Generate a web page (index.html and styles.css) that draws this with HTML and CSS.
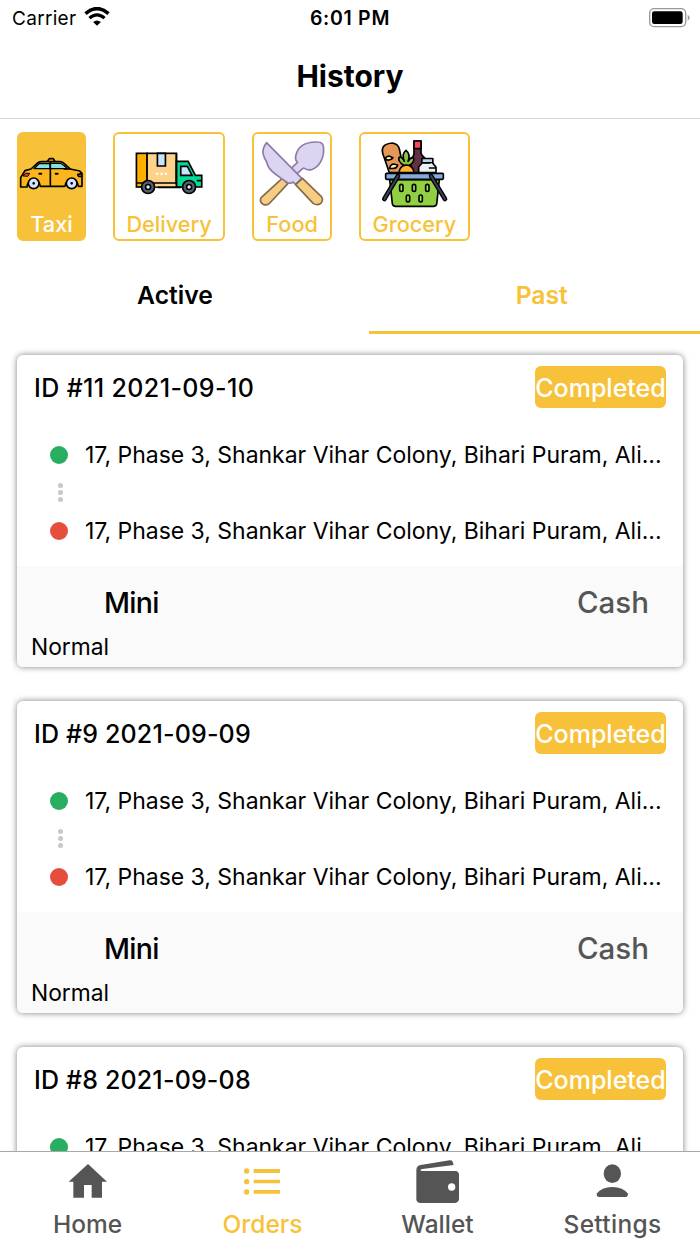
FILE: index.html
```html
<!DOCTYPE html>
<html lang="en">
<head>
    <meta charset="UTF-8">
    <title>History</title>
    <link rel="stylesheet" href="styles.css">
</head>
<body>
    <div class="app">
        <div class="status-bar">
            <div class="carrier">
                <span>Carrier</span>
                <svg class="wifi" viewBox="0 0 78 58">
                    <path d="M4 20 Q39 -10 74 20" fill="none" stroke="#000" stroke-width="11"/>
                    <path d="M16 34 Q39 14 62 34" fill="none" stroke="#000" stroke-width="10"/>
                    <path d="M27 46 Q39 36 51 46 L39 57 Z"/>
                </svg>
            </div>
            <span class="time">6:01 PM</span>
            <div class="battery">
                <svg viewBox="0 0 126 60">
                    <rect x="2" y="2" width="108" height="54" rx="13" fill="#fff" stroke="#999" stroke-width="4"/>
                    <rect x="9" y="10" width="92" height="38" rx="7"/>
                    <path d="M116 20 Q128 29 116 38 Z" fill="#999"/>
                </svg>
            </div>
        </div>
        <div class="header">History</div>

        <div class="categories">
            <div class="category taxi active">
                <svg viewBox="27 36 195 216" stroke="#000" stroke-width="5" stroke-linejoin="round" stroke-linecap="round">
                    <path d="M113 108 L118 101 H130 L134 108" fill="#ffb000"/>
                    <path d="M32 186 V158 L45 137 L63 132 L84 113 Q88 110 96 110 H150 Q158 111 163 116 L181 132 L209 138 L216 145 V184 H205 A20 20 0 0 0 165 184 H91 A20 20 0 0 0 51 186 Z" fill="#fcb51c"/>
                    <path d="M72 131 L87 116 H121 V131 Z" fill="#83e3e6" stroke-width="4"/>
                    <path d="M121 115 H149 Q156 115 173 131 H121 Z" fill="#83e3e6" stroke-width="4"/>
                    <path d="M121 113 V181 M163 132 H181"/>
                    <path d="M88 146 H94 M137 146 H143" stroke-width="6"/>
                    <path d="M40 152 L46 145 H59 L54 153 Z" fill="#ff3d25" stroke-width="3"/>
                    <path d="M214 146 L203 149 L206 154 H216" fill="none"/>
                    <circle cx="71" cy="175" r="16" fill="#d7e4ff"/>
                    <circle cx="185" cy="175" r="16" fill="#d7e4ff"/>
                    <path d="M71 175 h.1 M185 175 h.1" stroke-width="8"/>
                </svg>
                <span>Taxi</span>
            </div>
            <div class="category delivery">
                <svg viewBox="69.75 36 216 216" stroke="#000" stroke-width="5">
                    <rect x="80" y="85" width="32" height="101" fill="#ffae00"/>
                    <rect x="112" y="85" width="88" height="101" fill="#fdd28c"/>
                    <path d="M143 85 V123 H167 V85 Z" fill="#c4e5fb"/>
                    <path d="M200 109 H235 L257 151 H276 V186 H200 Z" fill="#05db92"/>
                    <path d="M213 124 H233 L247 151 H213 Z" fill="#c4e5fb"/>
                    <path d="M80 174 H200 M261 167 H276"/>
                    <path d="M132 181 H200" stroke="#fdd28c" stroke-width="7"/>
                    <path d="M143 187 H214 M200 85 V187"/>
                    <path d="M139 146 H146 M152 146 H159 M165 146 H172" stroke="#fff" stroke-width="6"/>
                    <circle cx="115" cy="186" r="19.500" fill="#536273"/>
                    <circle cx="238" cy="186" r="19.500" fill="#536273"/>
                    <circle cx="115" cy="186" r="7.500" fill="#e7edf3"/>
                    <circle cx="238" cy="186" r="7.500" fill="#e7edf3"/>
                </svg>
                <span>Delivery</span>
            </div>
            <div class="category food">
                <svg viewBox="34.5 36 216 216" stroke-width="5" stroke-linejoin="round">
                    <path d="M113 160 L130 176 L76 234 Q69 242 58 239 Q43 231 50 218 Z" fill="#f7cd83" stroke="#826c49"/>
                    <path d="M140 130 L159 112 Q151 105 154 91 C160 65 183 50 219 51 Q236 51 237 67 C240 98 225 126 201 134 Q187 137 178 129 L174 131 L158 146 Z" fill="#dcd5f2" stroke="#8f7aab"/>
                    <path d="M66 53 L172 160 L154 178 L145 171 Q140 177 129 173 C102 153 79 142 71 124 L65 108 C52 86 52 72 66 53 Z" fill="#dcd5f2" stroke="#8f7aab"/>
                    <path d="M174 160 L230 214 Q238 225 229 235 Q218 243 206 235 L153 179 Z" fill="#f7cd83" stroke="#826c49"/>
                </svg>
                <span>Food</span>
            </div>
            <div class="category grocery">
                <svg viewBox="72 36 216 216" stroke="#000" stroke-width="5" stroke-linejoin="round" stroke-linecap="round">
                    <path d="M106 143 L90 96 Q81 78 88 65 Q97 55 115 54 Q133 57 136 72 L151 143 Z" fill="#e69658"/>
                    <path d="M94 104 Q95 94 105 93 L117 98 Q111 108 94 104 M107 130 Q108 119 119 117 L131 120 Q128 133 107 130" fill="#fff3ad"/>
                    <path d="M180 48 H201 V85 Q204 94 212 99 V143 H170 V101 Q181 93 180 85 Z" fill="#643044"/>
                    <path d="M180 48 H201 V71 H180 Z" fill="#f64a5e"/>
                    <path d="M150 121 Q129 109 136 96 Q144 95 151 109 Q142 87 156 76 Q171 88 162 109 Q169 96 179 99 Q183 112 164 122 Z" fill="#8bc445"/>
                    <path d="M135 143 Q137 122 157 120 Q177 121 180 143 Z" fill="#ffb233"/>
                    <path d="M204 101 H236 V114 L246 127 V143 H194 V126 L204 114 Z" fill="#e8f0f4"/>
                    <path d="M204 101 H236 V113 H204 Z" fill="#b9d5ed" stroke-width="4"/>
                    <path d="M226 129 H244 M206 114 H228" stroke-width="4"/>
                    <path d="M107 164 H256 L248 238 Q246 244 238 244 H125 Q116 244 115 236 Z" fill="#91cf43"/>
                    <rect x="95" y="145" width="173" height="18" rx="3" fill="#82acdd"/>
                    <path d="M132 153 L91 222 M231 153 L273 222" stroke-width="14"/>
                    <path d="M132 153 L91 222 M231 153 L273 222" stroke="#39405c" stroke-width="6"/>
                    <g fill="#a9e851" stroke-width="5">
                        <rect x="137" y="178" width="10" height="21" rx="5"/>
                        <rect x="175" y="178" width="10" height="21" rx="5"/>
                        <rect x="215" y="178" width="10" height="21" rx="5"/>
                        <rect x="157" y="210" width="10" height="21" rx="5"/>
                        <rect x="195" y="210" width="10" height="21" rx="5"/>
                    </g>
                </svg>
                <span>Grocery</span>
            </div>
        </div>

        <div class="tabs">
            <div class="tab">Active</div>
            <div class="tab selected">Past</div>
        </div>

        <div class="orders">
            <div class="card">
                <div class="card-top">
                    <span class="order-id id-long">ID #11 2021-09-10</span>
                    <span class="badge">Completed</span>
                </div>
                <div class="route">
                    <div class="stop"><i class="dot green"></i><span>17, Phase 3, Shankar Vihar Colony, Bihari Puram, Ali...</span></div>
                    <div class="dots"><i></i><i></i><i></i></div>
                    <div class="stop"><i class="dot red"></i><span>17, Phase 3, Shankar Vihar Colony, Bihari Puram, Ali...</span></div>
                </div>
                <div class="card-bottom">
                    <div class="ride"><span class="mini">Mini</span><span class="cash">Cash</span></div>
                    <div class="type">Normal</div>
                </div>
            </div>

            <div class="card">
                <div class="card-top">
                    <span class="order-id">ID #9 2021-09-09</span>
                    <span class="badge">Completed</span>
                </div>
                <div class="route">
                    <div class="stop"><i class="dot green"></i><span>17, Phase 3, Shankar Vihar Colony, Bihari Puram, Ali...</span></div>
                    <div class="dots"><i></i><i></i><i></i></div>
                    <div class="stop"><i class="dot red"></i><span>17, Phase 3, Shankar Vihar Colony, Bihari Puram, Ali...</span></div>
                </div>
                <div class="card-bottom">
                    <div class="ride"><span class="mini">Mini</span><span class="cash">Cash</span></div>
                    <div class="type">Normal</div>
                </div>
            </div>

            <div class="card">
                <div class="card-top">
                    <span class="order-id">ID #8 2021-09-08</span>
                    <span class="badge">Completed</span>
                </div>
                <div class="route">
                    <div class="stop"><i class="dot green"></i><span>17, Phase 3, Shankar Vihar Colony, Bihari Puram, Ali...</span></div>
                </div>
            </div>
        </div>

        <div class="nav">
            <div class="nav-item">
                <svg viewBox="186 108 156 156" fill="#555">
                    <path d="M264 132 L321 185 H306 V233 H275 V195 H252 V233 H220 V185 H206 Z"/>
                </svg>
                <span>Home</span>
            </div>
            <div class="nav-item current">
                <svg viewBox="711 108 156 156" fill="#f7c239">
                    <circle cx="740" cy="153" r="8"/>
                    <circle cx="740" cy="185" r="8"/>
                    <circle cx="740" cy="216" r="8"/>
                    <path d="M761 147 H840 V159 H761 Z M761 179 H840 V190 H761 Z M761 210 H840 V221 H761 Z"/>
                </svg>
                <span>Orders</span>
            </div>
            <div class="nav-item">
                <svg viewBox="186 108 156 156" fill="#555">
                    <path d="M199 151 Q199 137 212 135 L299 121 Q305 120 308 125 L311 135 L217 147 Q211 148 211 151 Q212 153 218 153 H316 Q327 154 327 165 V237 Q326 248 315 249 H210 Q199 248 199 237 Z"/>
                    <circle cx="305" cy="201" r="11" fill="#fff"/>
                </svg>
                <span>Wallet</span>
            </div>
            <div class="nav-item">
                <svg viewBox="711 108 156 156" fill="#555">
                    <ellipse cx="787" cy="161" rx="26" ry="28"/>
                    <path d="M748 231 Q738 231 741 220 Q754 202 787 201 Q820 202 833 220 Q836 231 826 231 Z"/>
                </svg>
                <span class="nav-settings">Settings</span>
            </div>
        </div>
    </div>
</body>
</html>
```
FILE: styles.css
```css
* {
    box-sizing: border-box;
}
body {
    margin: 0;
    font-family: Inter, "Liberation Sans", sans-serif;
    background-color: #fff;
    color: #000;
}
.app {
    width: 700px;
    height: 1244px;
    display: flex;
    flex-direction: column;
    overflow: hidden;
}
svg {
    display: block;
    flex-shrink: 0;
}
span {
    white-space: nowrap;
}
.status-bar {
    height: 36px;
    padding: 0 9px 0 12px;
    display: grid;
    grid-template-columns: 1fr auto 1fr;
    align-items: center;
    font-size: 19px;
}
.carrier {
    display: flex;
    align-items: center;
    gap: 8px;
    letter-spacing: 0.3px;
}
.wifi {
    width: 26px;
    height: 19px;
    margin-bottom: 3px;
}
.time {
    margin-right: 3px;
    font-weight: 600;
    font-size: 19.5px;
    letter-spacing: 0.7px;
}
.battery {
    display: flex;
    justify-content: flex-end;
}
.battery svg {
    width: 42px;
    height: 20px;
}
.header {
    height: 83px;
    border-bottom: 1px solid #d8d8d8;
    text-align: center;
    font-size: 30px;
    font-weight: 700;
    line-height: 81px;
}
.categories {
    height: 122px;
    padding: 12.5px 17px 0;
    display: flex;
    gap: 26.8px;
}
.category {
    height: 109px;
    padding-top: 3px;
    border: 2px solid #f7c239;
    border-radius: 6px;
    color: #f7c239;
    display: flex;
    flex-direction: column;
    align-items: center;
    font-size: 21.7px;
    font-weight: 500;
    line-height: 30px;
}
.category svg {
    width: 72px;
    height: 72px;
}
.category.active {
    background-color: #f7c239;
    color: #fff;
}
.taxi {
    width: 69px;
}
.taxi svg {
    width: 65px;
}
.delivery {
    width: 112.5px;
}
.food {
    width: 80px;
}
.grocery {
    width: 111px;
}
.tabs {
    height: 93px;
    display: flex;
    justify-content: space-between;
    text-align: center;
    font-size: 24.7px;
    font-weight: 600;
    line-height: 108px;
}
.tab {
    width: 350px;
}
.selected {
    width: 331.5px;
    border-bottom: 3px solid #f7c239;
    color: #f7c239;
    text-indent: 15px;
}
.orders {
    flex: 1;
    min-height: 0;
    padding: 21px 17px 0;
    display: flex;
    flex-direction: column;
    gap: 34px;
    overflow: hidden;
}
.card {
    height: 312px;
    flex-shrink: 0;
    border-radius: 6px;
    background-color: #fff;
    box-shadow: 0 0 6px rgba(0, 0, 0, 0.5);
    overflow: hidden;
}
.card-top {
    height: 81px;
    padding: 11px 17px 0;
    display: flex;
    justify-content: space-between;
    align-items: flex-start;
    line-height: 44px;
}
.order-id {
    font-size: 25px;
    font-weight: 500;
    letter-spacing: 0.17px;
}
.id-long {
    letter-spacing: 0.38px;
}
.badge {
    width: 131px;
    height: 42px;
    border-radius: 6px;
    background-color: #f7c239;
    color: #fff;
    font-size: 25px;
    font-weight: 500;
    display: flex;
    justify-content: center;
}
.route {
    height: 130px;
    padding-left: 33px;
}
.stop {
    height: 38px;
    display: flex;
    align-items: center;
    gap: 17px;
    font-size: 23px;
    letter-spacing: -0.02px;
}
.dot {
    width: 18px;
    height: 18px;
    border-radius: 50%;
}
.green {
    background-color: #28ae60;
}
.red {
    background-color: #e74d3c;
}
.dots {
    width: 20px;
    height: 37px;
    margin-bottom: 1px;
    display: flex;
    flex-direction: column;
    align-items: center;
    justify-content: center;
    gap: 2px;
}
.dots i {
    width: 5px;
    height: 5px;
    border-radius: 50%;
    background-color: #c8c8c8;
}
.card-bottom {
    height: 101px;
    background-color: #fafafa;
}
.ride {
    height: 58px;
    padding: 7px 34px 0 87px;
    display: flex;
    justify-content: space-between;
    line-height: 59px;
    font-weight: 500;
}
.mini {
    font-size: 28.5px;
    letter-spacing: -0.7px;
}
.cash {
    font-size: 29.5px;
    line-height: 58px;
    color: #555;
}
.type {
    padding-left: 14px;
    font-size: 22.8px;
    line-height: 46px;
}
.nav {
    height: 93px;
    border-top: 1px solid #a8a8a8;
    background-color: #fff;
    display: grid;
    grid-template-columns: repeat(4, 1fr);
    padding-top: 4px;
}
.nav-item {
    display: flex;
    flex-direction: column;
    align-items: center;
    color: #555;
    font-size: 24.5px;
    font-weight: 500;
    line-height: 32px;
}
.nav-item svg {
    width: 52px;
    height: 52px;
}
.nav-settings {
    letter-spacing: 0.3px;
}
.current {
    color: #f7c239;
}
```
